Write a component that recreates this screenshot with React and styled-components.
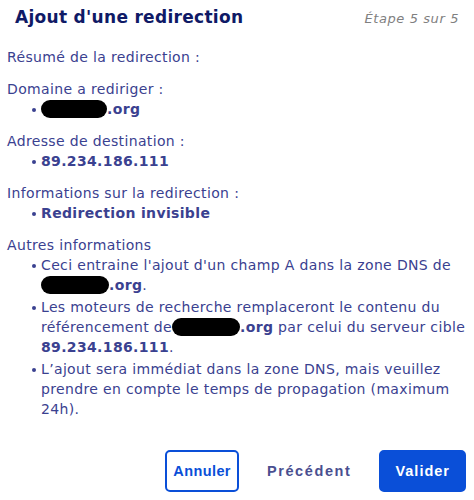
import styled, { createGlobalStyle } from "styled-components";

const Global = createGlobalStyle`
  body {
    margin: 0;
    background: #fff;
    font-family: "DejaVu Sans", "Liberation Sans", sans-serif;
  }
`;

function Hidden({ w }) {
  return <Redact style={{ width: w }} />;
}

function App() {
  return (
    <Container>
      <Global />
      <Header>
        <Title>Ajout d'une redirection</Title>
        <Step>Étape 5 sur 5</Step>
      </Header>
      <Body>
        <Label>Résumé de la redirection :</Label>

        <Section>
          <Label>Domaine a rediriger :</Label>
          <List>
            <Item>
              <Hidden w={66} />
              <b>.org</b>
            </Item>
          </List>
        </Section>

        <Section>
          <Label>Adresse de destination :</Label>
          <List>
            <Item>
              <b>89.234.186.111</b>
            </Item>
          </List>
        </Section>

        <Section>
          <Label>Informations sur la redirection :</Label>
          <List>
            <Item>
              <b>Redirection invisible</b>
            </Item>
          </List>
        </Section>

        <Section>
          <Label>Autres informations</Label>
          <List>
            <Item>
              Ceci entraine l'ajout d'un champ A dans la zone DNS de{" "}
              <Hidden w={68} />
              <b>.org</b>.
            </Item>
            <Item>
              Les moteurs de recherche remplaceront le contenu du référencement de
              <Hidden w={68} />
              <b>.org</b> par celui du serveur cible <b>89.234.186.111</b>.
            </Item>
            <Item>
              L’ajout sera immédiat dans la zone DNS, mais veuillez prendre en
              compte le temps de propagation (maximum 24h).
            </Item>
          </List>
        </Section>
      </Body>
      <Footer>
        <Button variant="outline">Annuler</Button>
        <Button variant="text">Précédent</Button>
        <Button variant="primary">Valider</Button>
      </Footer>
    </Container>
  );
}

const Container = styled.div`
  width: 474px;
  height: 500px;
  box-sizing: border-box;
  display: flex;
  flex-direction: column;
  color: #3a4190;
`;

const Header = styled.div`
  display: flex;
  justify-content: space-between;
  align-items: baseline;
  padding: 7px 15px 0 15px;
`;

const Title = styled.div`
  font-size: 17px;
  font-weight: bold;
  letter-spacing: 0.3px;
  color: #0f1a66;
`;

const Step = styled.div`
  font-size: 13px;
  color: #808080;
  letter-spacing: 0.6px;
  font-style: oblique 8deg;
`;

const Body = styled.div`
  padding: 20px 0 0 7px;
  font-size: 14px;
  letter-spacing: 0.35px;
  line-height: 20px;
`;

const Section = styled.div`
  margin-top: 12px;
`;

const Label = styled.div``;

const List = styled.ul`
  margin: 0;
  padding: 0 0 0 34px;
  list-style: none;
`;

const Item = styled.li`
  position: relative;
  padding-right: 4px;
  & + & {
    margin-top: 2px;
  }
  &::before {
    content: "";
    position: absolute;
    left: -9px;
    top: 9px;
    width: 4px;
    height: 4px;
    border-radius: 50%;
    background: #3a4190;
  }
  b {
    font-weight: bold;
  }
`;

const Redact = styled.span`
  display: inline-block;
  height: 18px;
  background: #000;
  border-radius: 9px;
  vertical-align: -4px;
`;

const Footer = styled.div`
  margin-top: auto;
  display: flex;
  justify-content: flex-end;
  align-items: center;
  gap: 28px;
  padding: 0 8px 8px 0;
`;

const Button = styled.button`
  height: 42px;
  box-sizing: border-box;
  border-radius: 5px;
  font-family: "Liberation Sans", Arial, sans-serif;
  font-weight: bold;
  font-size: 14.5px;
  cursor: pointer;
  ${({ variant }) =>
    variant === "primary"
      ? `background:#0a4fd8;color:#fff;border:2px solid #0a4fd8;padding:0 14px;letter-spacing:1px;`
      : variant === "outline"
      ? `background:#fff;color:#0a4fd8;border:2px solid #0a4fd8;padding:0 6px;letter-spacing:0.4px;`
      : `background:transparent;color:#4a4f90;border:none;padding:0;letter-spacing:1.6px;`}
`;

export default App;
